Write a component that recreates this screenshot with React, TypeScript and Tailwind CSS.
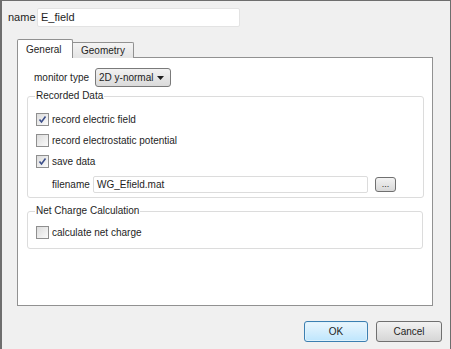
import React from "react";

function CheckBox({ checked, label }: { checked?: boolean; label: string }) {
  return (
    <label className="flex items-center gap-[3px] h-[13px] whitespace-nowrap">
      <span className="shrink-0 w-[13px] h-[13px] border border-[#8f8f8f] bg-gradient-to-br from-[#dcdcdc] to-[#fbfbfb] flex items-center justify-center">
        {checked && (
          <svg width="9" height="9" viewBox="0 0 9 9">
            <path d="M1.5 4.5 L3.5 7 L7.5 1.5" fill="none" stroke="#3c4f8a" strokeWidth="1.6" />
          </svg>
        )}
      </span>
      <span>{label}</span>
    </label>
  );
}

export default function App() {
  return (
    <div
      className="w-[451px] h-[349px] bg-[#f0f0f0] border-l-2 border-t border-r border-[#6e6e6e] text-[10px] text-[#1e1e1e] leading-none overflow-hidden whitespace-nowrap"
      style={{ fontFamily: '"Liberation Sans", Arial, sans-serif' }}
    >
      {/* name row */}
      <div className="flex items-center pt-[7px] pl-[6px]">
        <span className="w-[29px] text-[11px]">name</span>
        <div className="w-[203px] h-[19px] bg-white border border-[#e3e3e3] rounded-[2px] flex items-center pl-[3px] text-[11px]">
          E_field
        </div>
      </div>

      {/* tabs */}
      <div className="ml-[15px] mt-[13px] w-[416px]">
        <div className="flex items-end h-[18px] relative z-10">
          <div className="w-[56px] h-[19px] bg-white border border-b-0 border-[#919191] rounded-t-[2px] pl-[8px] pt-[5px]">
            General
          </div>
          <div className="w-[61px] h-[16px] bg-gradient-to-b from-[#f4f4f4] to-[#e4e4e4] border border-l-0 border-b-0 border-[#919191] rounded-tr-[2px] pl-[8px] pt-[3px]">
            Geometry
          </div>
        </div>
        <div className="h-[249px] bg-white border border-[#919191] -mt-px pt-[10px] px-[9px]">
          <div className="flex items-center pl-[7px]">
            <span className="w-[61px]">monitor type</span>
            <div className="w-[76px] h-[19px] border border-[#7a7a7a] rounded-[3px] bg-gradient-to-b from-[#f2f2f2] to-[#dadada] flex items-center pl-[3px] pr-[6px] justify-between">
              <span>2D y-normal</span>
              <svg width="7" height="4" viewBox="0 0 7 4">
                <path d="M0 0 H7 L3.5 4 Z" fill="#1e1e1e" />
              </svg>
            </div>
          </div>

          <fieldset className="mt-[4px] border border-[#dcdcdc] rounded-[3px] h-[107px] pl-[8px] pr-[27px]">
            <legend className="ml-[-1px] px-[1px]">Recorded Data</legend>
            <div className="flex flex-col gap-[8px] pt-[12px]">
              <CheckBox checked label="record electric field" />
              <CheckBox label="record electrostatic potential" />
              <CheckBox checked label="save data" />
            </div>
            <div className="flex items-center mt-[8px] pl-[16px]">
              <span className="w-[41px]">filename</span>
              <div className="w-[275px] h-[17px] border border-[#dcdcdc] rounded-[2px] flex items-center pl-[3px]">
                WG_Efield.mat
              </div>
              <div className="ml-[7px] w-[21px] h-[15px] border border-[#707070] rounded-[3px] bg-gradient-to-b from-[#f3f3f3] to-[#d8d8d8] flex items-end justify-center pb-[2px] text-[9px]">
                ...
              </div>
            </div>
          </fieldset>

          <fieldset className="mt-[8px] border border-[#dcdcdc] rounded-[3px] h-[43px] pl-[8px]">
            <legend className="ml-[-1px] px-[1px]">Net Charge Calculation</legend>
            <div className="pt-[10px]">
              <CheckBox label="calculate net charge" />
            </div>
          </fieldset>
        </div>
      </div>

      {/* buttons */}
      <div className="flex justify-end gap-[8px] pr-[8px] mt-[15px]">
        <button className="w-[64px] h-[21px] border border-[#3c7fb1] rounded-[3px] bg-gradient-to-b from-[#eaf6fd] to-[#bee6fd] shadow-[inset_0_0_0_1px_#dff2fc]">
          OK
        </button>
        <button className="w-[66px] h-[21px] border border-[#707070] rounded-[3px] bg-gradient-to-b from-[#f2f2f2] to-[#d6d6d6]">
          Cancel
        </button>
      </div>
    </div>
  );
}
